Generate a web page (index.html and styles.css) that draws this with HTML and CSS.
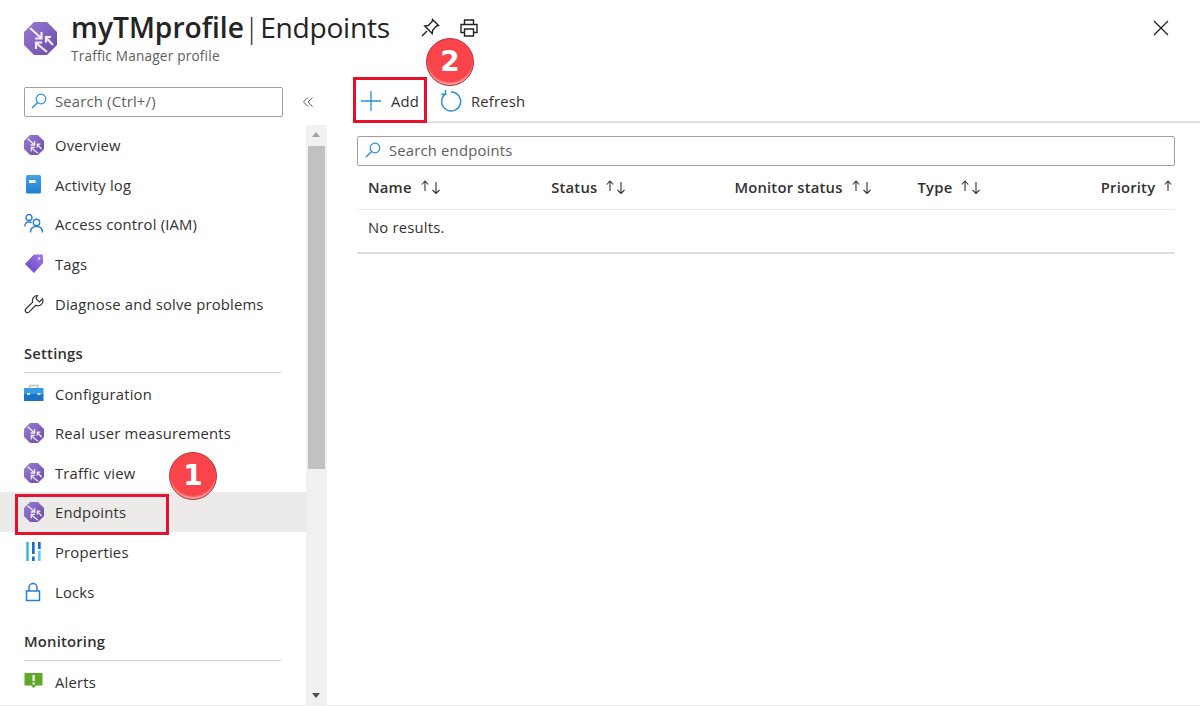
FILE: index.html
```html
<!DOCTYPE html>
<html lang="en">
<head>
  <meta charset="UTF-8">
  <title>myTMprofile | Endpoints</title>
  <link rel="stylesheet" href="styles.css">
</head>
<body>
  <svg class="sprites" width="0" height="0">
    <defs>
      <linearGradient id="tm-fill" x1="0" y1="0" x2="1" y2="1">
        <stop offset="0" stop-color="#9a7dd2"/>
        <stop offset="1" stop-color="#6a48aa"/>
      </linearGradient>
      <linearGradient id="book-fill" x1="0" y1="0" x2="0" y2="1">
        <stop offset="0" stop-color="#3fa4ea"/>
        <stop offset="1" stop-color="#1f7fd0"/>
      </linearGradient>
      <linearGradient id="tag-fill" x1="0" y1="1" x2="1" y2="0">
        <stop offset="0" stop-color="#6a3fc4"/>
        <stop offset="1" stop-color="#a07be6"/>
      </linearGradient>
    </defs>
    <symbol id="tm" viewBox="0 0 33 33">
      <path d="M10 0h13l10 10v13L23 33H10L0 23V10z" fill="url(#tm-fill)"/>
      <g fill="none" stroke="#efeaf8" stroke-width="2.200">
        <path d="M6 6l11 10M11 16.500h6.500V10"/>
        <path d="M23 30L12 21M12 27v-6.500h6"/>
        <path d="M29 23l-7-7.500M22 20.500v-5.500h5"/>
      </g>
    </symbol>
    <symbol id="search" viewBox="0 0 16 16">
      <circle cx="10" cy="6" r="4.800" fill="none" stroke="#2a8fdc" stroke-width="1.200"/>
      <path d="M6.600 9.400L1 15" stroke="#2a8fdc" stroke-width="1.400" fill="none"/>
    </symbol>
    <symbol id="sort" viewBox="0 0 22 15">
      <path d="M5 11V1.500M1.800 4.500L5 1l3.200 3.500" fill="none" stroke="#333" stroke-width="1.100"/>
      <path d="M16 2v11.500M12.500 10l3.500 3.500 3.500-3.500" fill="none" stroke="#333" stroke-width="1.100"/>
    </symbol>
  </svg>

  <header class="page-head">
    <svg class="head-logo"><use href="#tm"/></svg>
    <div class="head-titles">
      <h1><b>myTMprofile</b><span class="head-bar">|</span><span class="head-page">Endpoints</span></h1>
      <p>Traffic Manager profile</p>
    </div>
    <svg class="head-btn pin" viewBox="0 0 20 20" fill="none" stroke="#222" stroke-width="1.400">
      <path d="M12.500 1.500l6 6-1.800.5-4 4-.5 3.500-7.500-7.500 3.500-.5 4-4z"/>
      <path d="M7 13L2 18"/>
    </svg>
    <svg class="head-btn print" viewBox="0 0 20 20" fill="none" stroke="#222" stroke-width="1.400">
      <path d="M5.500 6V2h9v4M5.500 14.500H2V6.500h16v8h-3.500"/>
      <path d="M5.500 11h9v7h-9z"/>
    </svg>
    <svg class="head-close" viewBox="0 0 16 16" fill="none" stroke="#222" stroke-width="1.300">
      <path d="M1 1l14 14M15 1L1 15"/>
    </svg>
  </header>

  <div class="layout">
    <aside class="sidebar">
      <div class="side-search-row">
        <div class="search-box side-search">
          <svg class="search-icon"><use href="#search"/></svg>
          <span>Search (Ctrl+/)</span>
        </div>
        <svg class="collapse" viewBox="0 0 12 12" fill="none" stroke="#555" stroke-width="1">
          <path d="M6 1.500L1.500 6 6 10.500M10.500 1.500L6 6l4.500 4.500"/>
        </svg>
      </div>
      <div class="side-body">
        <nav class="menu">
          <a class="menu-item"><svg class="menu-icon"><use href="#tm"/></svg>Overview</a>
          <a class="menu-item">
            <svg class="menu-icon" viewBox="0 0 20 20">
              <rect x="2" y="0" width="15" height="18.500" rx="1.500" fill="url(#book-fill)"/>
              <path d="M5 5h6.500v3H5z" fill="#fff"/>
            </svg>Activity log</a>
          <a class="menu-item">
            <svg class="menu-icon" viewBox="0 0 20 20" fill="none" stroke="#2a7fd4" stroke-width="1.400">
              <circle cx="5" cy="3.500" r="3"/><path d="M.7 12.500C.7 9.500 2.500 8 5 8c1 0 2 .3 2.500 1"/>
              <circle cx="12.500" cy="8.500" r="3.200"/><path d="M6.500 18.500c0-4 2.500-6 6-6s6 2 6 6"/>
            </svg>Access control (IAM)</a>
          <a class="menu-item">
            <svg class="menu-icon" viewBox="0 0 20 20">
              <path d="M10 1h8.500v8L10 18.500 1.500 10z" fill="url(#tag-fill)" stroke="url(#tag-fill)" stroke-linejoin="round"/>
              <circle cx="15" cy="4.500" r="1.200" fill="#e8e0f8"/>
            </svg>Tags</a>
          <a class="menu-item">
            <svg class="menu-icon" viewBox="0 0 20 20" fill="none" stroke="#333" stroke-width="1.200">
              <path d="M13.500 1.500a5 5 0 0 0-4.800 6.600L1.800 15a2.200 2.200 0 0 0 3.100 3.100l6.900-6.800a5 5 0 0 0 6.700-6.500L15.300 8 12 4.700z"/>
            </svg>Diagnose and solve problems</a>
        </nav>

        <h2 class="menu-title">Settings</h2>
        <nav class="menu">
          <a class="menu-item">
            <svg class="menu-icon" viewBox="0 0 20 20">
              <path d="M6 4V1.500h8V4" fill="none" stroke="#b8c4cc" stroke-width="1.500"/>
              <path d="M0 4h19.500v6H0z" fill="#3a9be0"/><path d="M0 10h19.500v7H0z" fill="#1c74c4"/>
              <path d="M3 9h3v2H3zM13.500 9h3v2h-3z" fill="#cfe6f7"/>
            </svg>Configuration</a>
          <a class="menu-item"><svg class="menu-icon"><use href="#tm"/></svg>Real user measurements</a>
          <a class="menu-item"><svg class="menu-icon"><use href="#tm"/></svg>Traffic view</a>
          <a class="menu-item active"><svg class="menu-icon"><use href="#tm"/></svg>Endpoints</a>
          <a class="menu-item">
            <svg class="menu-icon" viewBox="0 0 20 20">
              <path d="M2.300 0h2.400v19H2.300z" fill="#32b0e8"/><path d="M8 0h2.700v12H8zM8 14.500h2.700V19H8z" fill="#1c6fbf"/>
              <path d="M14 0h2.700v7H14z" fill="#1c6fbf"/><path d="M14 8.500h2.700V19H14z" fill="#63cdf0"/>
            </svg>Properties</a>
          <a class="menu-item">
            <svg class="menu-icon" viewBox="0 0 20 20" fill="none" stroke="#2a7fd4" stroke-width="1.500">
              <path d="M2.500 9h13v9.500h-13z"/><path d="M5 9V5.500a4 4 0 0 1 8 0V9"/>
            </svg>Locks</a>
        </nav>

        <h2 class="menu-title">Monitoring</h2>
        <nav class="menu">
          <a class="menu-item">
            <svg class="menu-icon" viewBox="0 0 20 20">
              <path d="M.5 1h18v12.500h-6.500L9.500 16 7 13.500H.5z" fill="#5ea82a"/>
              <path d="M8.500 3h2.200v6H8.500zM8.500 10.500h2.200v2H8.500z" fill="#fff"/>
            </svg>Alerts</a>
        </nav>

        <div class="scrollbar">
          <span class="arrow-up"></span>
          <div class="thumb"></div>
          <span class="arrow-down"></span>
        </div>
      </div>
    </aside>

    <main class="content">
      <div class="toolbar">
        <a class="tool tool-first">
          <svg class="tool-add" viewBox="0 0 20 20" fill="none" stroke="#2a8fdc" stroke-width="1.300">
            <path d="M10 0v20M0 10h20"/>
          </svg>Add</a>
        <a class="tool">
          <svg class="tool-refresh" viewBox="0 0 22 22" fill="none" stroke="#2a8fdc" stroke-width="1.500">
            <path d="M6 3.500a9.500 9.500 0 1 0 5-1.500"/><path d="M5.500 0v4.300H1.500"/>
          </svg>Refresh</a>
      </div>
      <div class="search-box table-search">
        <svg class="search-icon"><use href="#search"/></svg>
        <span>Search endpoints</span>
      </div>
      <div class="table-head">
        <div class="col">Name<svg class="sort-icon"><use href="#sort"/></svg></div>
        <div class="col">Status<svg class="sort-icon"><use href="#sort"/></svg></div>
        <div class="col">Monitor status<svg class="sort-icon"><use href="#sort"/></svg></div>
        <div class="col">Type<svg class="sort-icon"><use href="#sort"/></svg></div>
        <div class="col">Priority<svg class="sort-icon"><use href="#sort"/></svg></div>
      </div>
      <div class="table-empty">No results.</div>
    </main>
  </div>

  <!-- annotation marks drawn over the screenshot -->
  <div class="mark mark-endpoints"></div>
  <div class="mark mark-add"></div>
  <div class="badge badge-one">1</div>
  <div class="badge badge-two">2</div>
</body>
</html>
```

FILE: styles.css
```css
* {
  box-sizing: border-box;
}

html,
body {
  margin: 0;
  height: 706px;
  overflow: hidden;
}

body {
  position: relative;
  background: #fff;
  color: #323130;
  font-family: "Open Sans", "Noto Sans", sans-serif;
  font-size: 14.8px;
  letter-spacing: 0.2px;
  border-bottom: 1px solid #eee;
}

.sprites {
  position: absolute;
}

/* page header */
.page-head {
  display: flex;
  align-items: flex-start;
  height: 86px;
  padding: 8px 31px 0 24px;
}

.head-logo {
  width: 33px;
  height: 33px;
  margin: 14px 14px 0 0;
  flex: none;
}

.head-titles h1 {
  margin: 0;
  font-size: 28.2px;
  font-weight: 400;
  line-height: 38px;
  letter-spacing: 0;
  color: #252423;
  white-space: nowrap;
}

.head-titles b {
  font-weight: 600;
}

.head-bar {
  font-weight: 300;
}

.head-page {
  margin-left: 1px;
  letter-spacing: -0.3px;
}

.head-titles p {
  margin: 1px 0 0;
  font-size: 13.6px;
  line-height: 18px;
  color: #605e5c;
}

.head-btn {
  width: 20px;
  height: 20px;
  margin-top: 10px;
}

.pin {
  margin-left: 30px;
}

.print {
  margin-left: 19px;
}

.head-close {
  width: 16px;
  height: 16px;
  margin: 12px 0 0 auto;
}

/* columns under the header */
.layout {
  display: flex;
  height: 619px;
}

.sidebar {
  width: 327px;
  flex: none;
}

.side-search-row {
  display: flex;
  align-items: flex-start;
  height: 39px;
}

.search-box {
  display: flex;
  align-items: center;
  height: 30px;
  padding-bottom: 2px;
  border: 1px solid #a19f9d;
  border-radius: 2px;
  color: #605e5c;
}

.side-search {
  width: 259px;
  margin: 1px 0 0 24px;
  padding-left: 6px;
}

.search-icon {
  width: 16px;
  height: 16px;
  margin-right: 8px;
}

.collapse {
  width: 12px;
  height: 12px;
  margin: 10px 0 0 19px;
}

.side-body {
  position: relative;
  height: 580px;
  padding-right: 21px;
}

.menu-item {
  display: flex;
  align-items: center;
  height: 39.6px;
  padding: 1px 0 0 24px;
  white-space: nowrap;
}

.menu-item.active {
  background: #edebe9;
}

.menu-icon {
  width: 20px;
  height: 20px;
  margin-right: 11px;
  flex: none;
}

.menu-title {
  height: 50.4px;
  margin: 0 24px 0 24px;
  padding-top: 20px;
  border-bottom: 1px solid #d2d0ce;
  font-size: 14.8px;
  font-weight: 600;
  line-height: 21px;
  width: 257px;
  color: #323130;
}

/* fake browser scrollbar of the menu */
.scrollbar {
  position: absolute;
  top: 0;
  right: 0;
  bottom: 0;
  width: 21px;
  padding-top: 21px;
  background: #f1f1f1;
}

.thumb {
  width: 17px;
  height: 323px;
  margin-left: 2px;
  background: #c1c1c1;
}

.arrow-up,
.arrow-down {
  position: absolute;
  left: 6px;
  border-left: 4.5px solid transparent;
  border-right: 4.5px solid transparent;
}

.arrow-up {
  top: 7px;
  border-bottom: 5px solid #a3a3a3;
}

.arrow-down {
  bottom: 7px;
  border-top: 5px solid #505050;
}

/* blade content */
.content {
  width: 848px;
  margin-left: 28px;
  overflow: hidden;
  flex: none;
}

.toolbar {
  display: flex;
  height: 37px;
  padding: 0 0 5px 6px;
  border-bottom: 2px solid #e1dfdd;
}

.tool {
  display: flex;
  align-items: center;
}

.tool-first {
  width: 79px;
}

.tool-add {
  width: 20px;
  height: 20px;
  margin-right: 10px;
}

.tool-refresh {
  width: 22px;
  height: 22px;
  margin-right: 9px;
}

.table-search {
  width: 818px;
  margin: 13px 0 0 2px;
  padding-left: 7px;
}

.table-head {
  display: grid;
  grid-template-columns: repeat(5, 183.2px);
  align-items: center;
  width: 818px;
  height: 44px;
  margin-left: 2px;
  padding: 0 0 1px 11px;
  overflow: hidden;
  border-bottom: 1px solid #edebe9;
  font-weight: 600;
}

.col {
  display: flex;
  align-items: center;
  white-space: nowrap;
}

.sort-icon {
  width: 22px;
  height: 15px;
  margin-left: 8px;
  flex: none;
}

.table-empty {
  width: 818px;
  height: 44px;
  margin-left: 2px;
  padding: 7px 0 0 11px;
  line-height: 21px;
  border-bottom: 2px solid #e1dfdd;
}

/* red annotation marks */
.mark {
  position: absolute;
  border: 3px solid #e8112d;
}

.mark-endpoints {
  left: 15px;
  top: 494px;
  width: 154px;
  height: 41px;
}

.mark-add {
  left: 353px;
  top: 77px;
  width: 74px;
  height: 46px;
}

.badge {
  position: absolute;
  width: 48px;
  height: 48px;
  border-radius: 50%;
  background: #f8444a;
  border: 1px solid #b83a3e;
  box-shadow: inset 0 -3px 2px -1px #ffb0b0;
  color: #fff;
  font-family: "DejaVu Sans", sans-serif;
  font-size: 28px;
  font-weight: 700;
  letter-spacing: 0;
  line-height: 46px;
  text-align: center;
}

.badge-one {
  left: 169px;
  top: 452px;
}

.badge-two {
  left: 426px;
  top: 38px;
}
```
